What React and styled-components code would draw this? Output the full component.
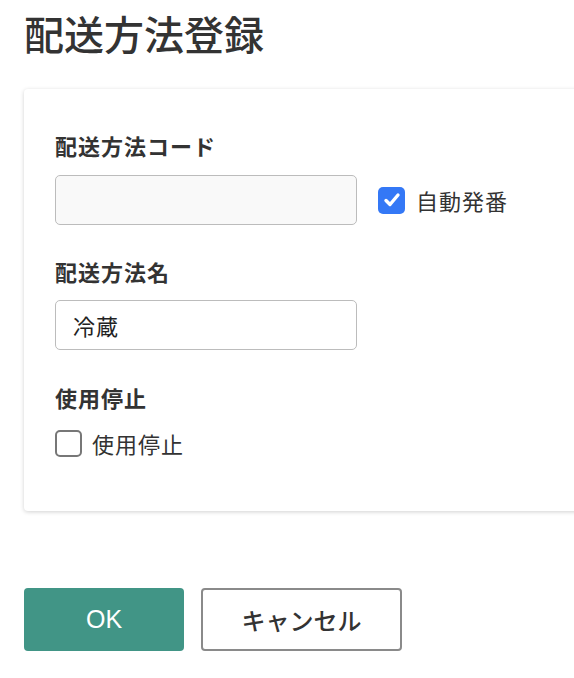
import React from "react";
import styled, { createGlobalStyle } from "styled-components";

const Global = createGlobalStyle`
  html, body { margin: 0; padding: 0; background: #fff; overflow: hidden; }
  body { font-family: "Noto Sans CJK JP", "Noto Sans", sans-serif; color: #333; }
  * { box-sizing: border-box; }
`;

const Page = styled.div`
  padding: 0 0 0 24px;
  width: 640px;
`;

const Title = styled.h1`
  margin: 9px 0 0;
  font-size: 40px;
  line-height: 48px;
  font-weight: 500;
  color: #333;
`;

const Card = styled.section`
  margin-top: 32px;
  width: 600px;
  background: #fff;
  border-radius: 4px;
  box-shadow: 0 1px 4px rgba(0, 0, 0, 0.18);
  padding: 40px 31px 52px;
  display: flex;
  flex-direction: column;
`;

const Label = styled.div`
  font-size: 22px;
  line-height: 32px;
  font-weight: 700;
  letter-spacing: 1px;
  color: #333;
  margin-top: ${(p) => p.$top || 0}px;
`;

const Row = styled.div`
  display: flex;
  align-items: center;
  gap: ${(p) => p.$gap || 0}px;
  margin-top: ${(p) => p.$top || 0}px;
`;

const TextInput = styled.input`
  width: 302px;
  height: 50px;
  border: 1.5px solid #bcbcbc;
  border-radius: 5px;
  background: ${(p) => (p.$disabled ? "#f9f9f9" : "#fff")};
  padding: 0 17px;
  font-family: inherit;
  font-size: 22px;
  letter-spacing: 1px;
  color: #222;
  outline: none;
`;

const Check = styled.label`
  display: flex;
  align-items: center;
  gap: ${(p) => p.$gap}px;
  font-size: 22px;
  line-height: 32px;
  letter-spacing: 1px;
  color: #333;
  cursor: pointer;
`;

const Box = styled.span`
  width: 27px;
  height: 27px;
  border-radius: 5px;
  display: inline-flex;
  align-items: center;
  justify-content: center;
  background: ${(p) => (p.$checked ? "#3478f6" : "#fff")};
  border: ${(p) => (p.$checked ? "none" : "2px solid #777")};
`;

const Buttons = styled.div`
  display: flex;
  gap: 17px;
  margin-top: 77px;
`;

const Button = styled.button`
  height: 63px;
  width: ${(p) => p.$w}px;
  border-radius: 4px;
  font-family: ${(p) =>
    p.$primary
      ? '"Liberation Sans", Arial, sans-serif'
      : '"Noto Sans CJK JP", sans-serif'};
  font-size: ${(p) => (p.$primary ? 25 : 24)}px;
  cursor: pointer;
  background: ${(p) => (p.$primary ? "#419586" : "#fff")};
  color: ${(p) => (p.$primary ? "#fff" : "#333")};
  border: ${(p) => (p.$primary ? "none" : "2px solid #8a8a8a")};
  font-weight: ${(p) => (p.$primary ? 400 : 500)};
`;

function CheckBox({ checked, children, gap }) {
  return (
    <Check $gap={gap}>
      <Box $checked={checked}>
        {checked && (
          <svg width="18" height="18" viewBox="0 0 18 18">
            <path
              d="M3 9.5 L7 13.5 L15 4"
              fill="none"
              stroke="#fff"
              strokeWidth="3.4"
              strokeLinecap="round"
              strokeLinejoin="round"
            />
          </svg>
        )}
      </Box>
      {children}
    </Check>
  );
}

export default function App() {
  return (
    <>
      <Global />
      <Page>
        <Title>配送方法登録</Title>
        <Card>
          <Label>配送方法コード</Label>
          <Row $top={14} $gap={21}>
            <TextInput $disabled readOnly />
            <CheckBox checked gap={11}>自動発番</CheckBox>
          </Row>
          <Label $top={30}>配送方法名</Label>
          <Row $top={13}>
            <TextInput defaultValue="冷蔵" />
          </Row>
          <Label $top={31}>使用停止</Label>
          <Row $top={14}>
            <CheckBox gap={10}>使用停止</CheckBox>
          </Row>
        </Card>
        <Buttons>
          <Button $primary $w={160}>OK</Button>
          <Button $w={201}>キャンセル</Button>
        </Buttons>
      </Page>
    </>
  );
}
